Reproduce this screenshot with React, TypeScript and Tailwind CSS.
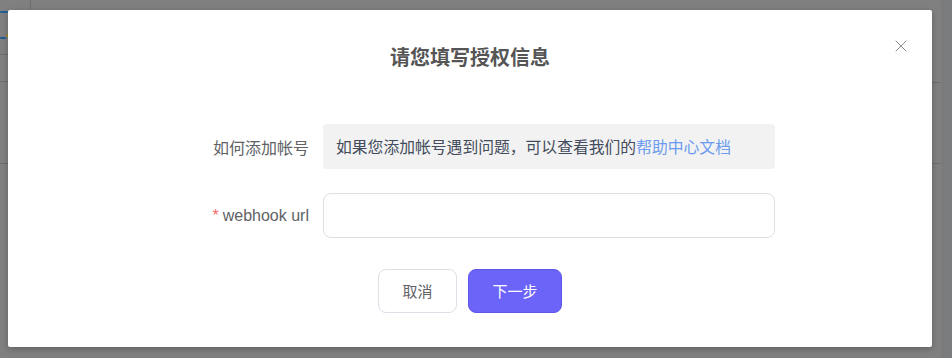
import { X } from 'lucide-react';

const cjk = "font-['Noto_Sans_CJK_SC','Noto_Sans',sans-serif]";

function Backdrop() {
  // dimmed page lying under the modal overlay
  return (
    <div className="absolute inset-0 flex">
      <div className="relative flex-1">
        <div className="absolute left-[30px] top-0 h-[10px] w-px bg-[#6e6e6e]" />
        <div className="absolute left-0 top-[11px] h-[2px] w-[8px] rounded-full bg-[#1f5c96]" />
        <div className="absolute left-0 top-[37px] h-[2px] w-[6px] rounded-full bg-[#1f5c96]" />
        <div className="absolute left-[6px] top-[34px] h-[3px] w-[3px] rounded-full bg-[#a08a2a]" />
        <div className="absolute left-0 top-[54px] h-px w-[8px] bg-[#6e6e6e]" />
        <div className="absolute left-0 top-[81px] h-px w-[8px] bg-[#6e6e6e]" />
        <div className="absolute left-0 top-[163px] h-px w-[8px] bg-[#6e6e6e]" />
        <div className="absolute right-0 top-[82px] h-px w-[9px] bg-[#6e6e6e]" />
        <div className="absolute right-0 top-[163px] h-px w-[9px] bg-[#6e6e6e]" />
      </div>
      <div className="w-[11px] bg-[#7a7b7d]" />
    </div>
  );
}

export default function App() {
  return (
    <div className={`relative w-[952px] h-[358px] overflow-hidden bg-[#808080] ${cjk}`}>
      <Backdrop />

      {/* Modal */}
      <div className="absolute left-[8px] top-[10px] w-[924px] h-[337px] bg-white rounded-[2px] shadow-[0_2px_6px_rgba(0,0,0,0.25)]">
        <button className="absolute left-[883px] top-[26px] w-[20px] h-[20px] flex items-center justify-center text-[#8c8c8c]">
          <X size={20} strokeWidth={1.2} />
        </button>

        <h2 className="pt-[33px] text-center text-[20px] leading-[28px] font-bold text-[#555555]">
          请您填写授权信息
        </h2>

        <div className="mt-[53px] flex flex-col gap-[24px] pl-[195px]">
          <div className="flex items-center">
            <label className="w-[120px] pr-[14px] text-right text-[16px] text-[#606266]">如何添加帐号</label>
            <div className="w-[452px] h-[45px] flex items-center px-[13px] rounded-[4px] bg-[#f2f2f2] text-[15.8px] text-[#434c5c]">
              如果您添加帐号遇到问题，可以查看我们的
              <a className="text-[#6b9bf0] cursor-pointer">帮助中心文档</a>
            </div>
          </div>

          <div className="flex items-center">
            <label className="w-[120px] pr-[14px] text-right text-[16px] text-[#606266] font-['Liberation_Sans','Noto_Sans_CJK_SC',sans-serif]">
              <span className="text-[#f56c6c] mr-[4px]">*</span>webhook url
            </label>
            <input
              type="text"
              className="w-[452px] h-[45px] px-[13px] rounded-[8px] border border-[#dcdfe6] bg-white text-[16px] outline-none"
            />
          </div>
        </div>

        <div className="mt-[31px] flex justify-center gap-[11px]">
          <button className="w-[79px] h-[44px] rounded-[8px] border border-[#dcdfe6] bg-white text-[15px] text-[#606266]">
            取消
          </button>
          <button className="w-[94px] h-[44px] rounded-[8px] border border-[#5f57ea] bg-[#6c64f8] text-[15px] text-white">
            下一步
          </button>
        </div>
      </div>
    </div>
  );
}
